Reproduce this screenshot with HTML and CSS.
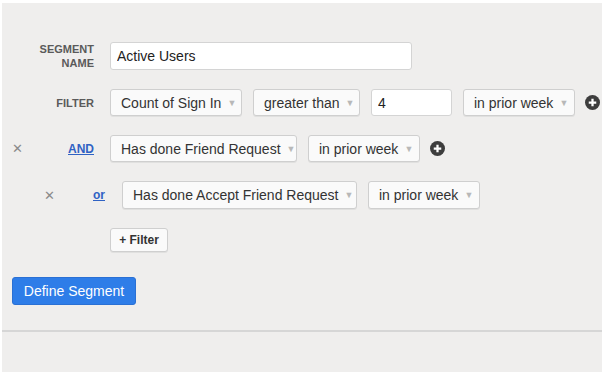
FILE: index.html
```html
<!DOCTYPE html>
<html lang="en">

<head>
    <meta charset="utf-8">
    <meta name="viewport" content="width=device-width, initial-scale=1.0">
    <title>Define Segment</title>
    <link rel="stylesheet" href="styles.css">
</head>

<body>
    <div class="panel">
        <div class="segment-form">
            <div class="row name-row">
                <div class="row-head"><span class="field-label">Segment<br>Name</span></div>
                <input type="text" class="text-input name-input" value="Active Users">
            </div>

            <div class="row filter-row">
                <div class="row-head"><span class="field-label">Filter</span></div>
                <div class="controls">
                    <div class="select w-count">Count of Sign In <span class="caret">&#9660;</span></div>
                    <div class="select w-compare">greater than <span class="caret">&#9660;</span></div>
                    <input type="text" class="text-input value-input" value="4">
                    <div class="select w-period">in prior week <span class="caret">&#9660;</span></div>
                    <button class="add-btn" type="button" aria-label="Add">
                        <svg width="15" height="15" viewBox="0 0 16 16">
                            <circle cx="8" cy="8" r="8" fill="#3d3d3d" />
                            <path d="M8 4v8M4 8h8" stroke="#fff" stroke-width="2.4" />
                        </svg>
                    </button>
                </div>
            </div>

            <div class="row and-row">
                <div class="row-head">
                    <span class="remove">&#10005;</span>
                    <a href="#" class="joiner">AND</a>
                </div>
                <div class="controls">
                    <div class="select w-event">Has done Friend Request <span class="caret">&#9660;</span></div>
                    <div class="select w-period">in prior week <span class="caret">&#9660;</span></div>
                    <button class="add-btn" type="button" aria-label="Add">
                        <svg width="15" height="15" viewBox="0 0 16 16">
                            <circle cx="8" cy="8" r="8" fill="#3d3d3d" />
                            <path d="M8 4v8M4 8h8" stroke="#fff" stroke-width="2.4" />
                        </svg>
                    </button>
                </div>
            </div>

            <div class="row or-row">
                <div class="row-head">
                    <span class="remove">&#10005;</span>
                    <a href="#" class="joiner">or</a>
                </div>
                <div class="controls">
                    <div class="select w-event-long">Has done Accept Friend Request <span class="caret">&#9660;</span></div>
                    <div class="select w-period">in prior week <span class="caret">&#9660;</span></div>
                </div>
            </div>

            <div class="row add-row">
                <div class="row-head"></div>
                <button class="filter-btn" type="button">+ Filter</button>
            </div>
        </div>

        <button class="define-btn" type="button">Define Segment</button>

        <div class="divider"></div>
    </div>
</body>

</html>
```

FILE: styles.css
```css
* {
    margin: 0;
    padding: 0;
    box-sizing: border-box;
}

body {
    font-family: "Liberation Sans", Arial, sans-serif;
    background: #ffffff;
    padding: 3px 2px 0 2px;
    color: #333;
    height: 372px;
    overflow: hidden;
}

.panel {
    background: #efeeed;
    height: 369px;
    padding-top: 39px;
}

.segment-form {
    display: flex;
    flex-direction: column;
}

.row {
    display: flex;
    align-items: center;
}

.row-head {
    width: 92px;
    flex-shrink: 0;
    display: flex;
    align-items: center;
    justify-content: space-between;
    margin-right: 16px;
}

.field-label {
    margin-left: auto;
    text-align: right;
    font-size: 11px;
    font-weight: 700;
    line-height: 14px;
    color: #5a5a5a;
    text-transform: uppercase;
}

.name-row {
    height: 28px;
}

.filter-row {
    margin-top: 19px;
}

.and-row {
    margin-top: 19px;
    padding-left: 10px;
}

.and-row .row-head {
    width: 82px;
}

.or-row {
    margin-top: 19px;
    padding-left: 42px;
}

.or-row .row-head {
    width: 61px;
    margin-right: 17px;
}

.add-row {
    margin-top: 19px;
}

.controls {
    display: flex;
    align-items: center;
    gap: 11px;
}

.text-input {
    font-family: inherit;
    font-size: 14px;
    color: #222;
    background: #fff;
    border: 1px solid #d4d4d4;
    border-radius: 3px;
    outline: none;
}

.name-input {
    width: 302px;
    height: 28px;
    padding: 0 6px;
}

.value-input {
    width: 81px;
    height: 27px;
    padding: 0 6px;
}

.select {
    height: 27px;
    display: flex;
    align-items: center;
    justify-content: space-between;
    padding: 0 8px 0 10px;
    font-size: 14px;
    color: #333;
    background: #fafafa;
    border: 1px solid #cfcfcf;
    border-radius: 3px;
    box-shadow: 0 1px 0 rgba(0, 0, 0, 0.06);
    white-space: nowrap;
}

.or-row .select {
    height: 28px;
}

.caret {
    font-size: 9px;
    color: #b8b8b8;
    margin-left: 6px;
}

.w-count {
    width: 132px;
}

.w-compare {
    width: 107px;
}

.w-period {
    width: 112px;
}

.w-event {
    width: 187px;
}

.w-event-long {
    width: 235px;
}

.add-btn {
    border: none;
    background: none;
    display: flex;
    margin-left: -1px;
}

.remove {
    font-size: 13px;
    color: #8a8a8a;
}

.joiner {
    color: #2f62c4;
    font-size: 12px;
    font-weight: 700;
    text-decoration: underline;
}

.filter-btn {
    width: 58px;
    height: 24px;
    font-family: inherit;
    font-size: 12px;
    font-weight: 700;
    color: #333;
    background: #fafafa;
    border: 1px solid #cfcfcf;
    border-radius: 3px;
    box-shadow: 0 1px 0 rgba(0, 0, 0, 0.06);
}

.define-btn {
    display: block;
    margin: 25px 0 0 10px;
    width: 124px;
    height: 28px;
    font-family: inherit;
    font-size: 14px;
    color: #fff;
    background: #2e7de8;
    border: 1px solid #2a70d4;
    border-radius: 3px;
}

.divider {
    margin-top: 25px;
    height: 2px;
    background: #d6d6d6;
}
```
